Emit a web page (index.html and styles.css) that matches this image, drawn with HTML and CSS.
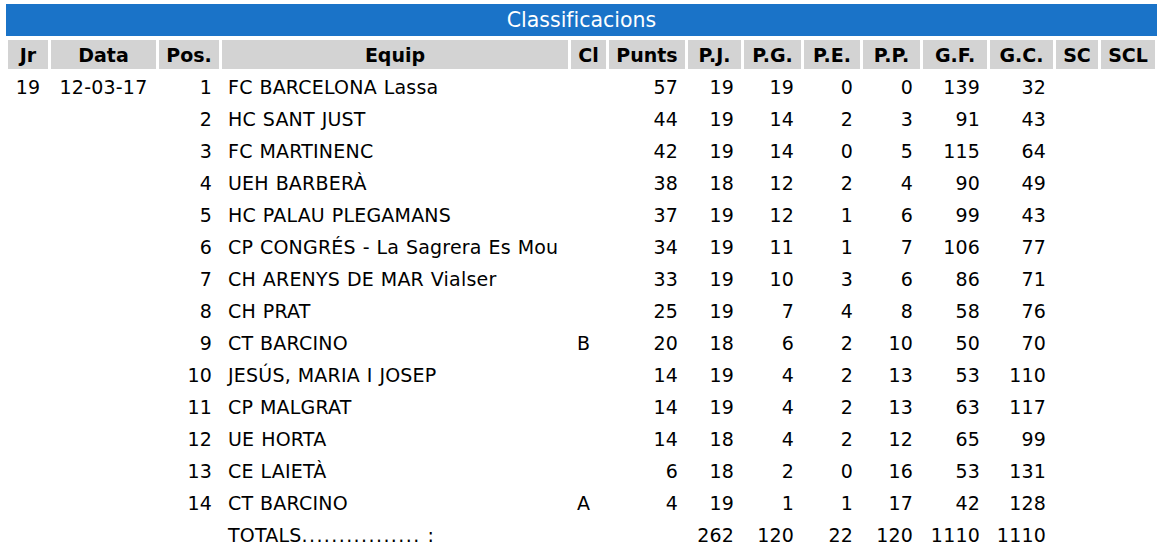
FILE: index.html
```html
<!DOCTYPE html>
<html lang="ca">
<head>
<meta charset="utf-8">
<title>Classificacions</title>
<link rel="stylesheet" href="styles.css">
</head>
<body>
<div class="panel">
  <div class="title">Classificacions</div>
  <table class="standings">
    <thead>
      <tr>
        <th class="w-jr">Jr</th>
        <th class="w-data">Data</th>
        <th class="w-pos">Pos.</th>
        <th class="w-equip">Equip</th>
        <th class="w-cl">Cl</th>
        <th class="w-punts">Punts</th>
        <th class="w-pj">P.J.</th>
        <th class="w-pg">P.G.</th>
        <th class="w-pe">P.E.</th>
        <th class="w-pp">P.P.</th>
        <th class="w-gf">G.F.</th>
        <th class="w-gc">G.C.</th>
        <th class="w-sc">SC</th>
        <th class="w-scl">SCL</th>
      </tr>
    </thead>
    <tbody>
      <tr><td class="ctr">19</td><td class="ctr">12-03-17</td><td class="num">1</td><td>FC BARCELONA Lassa</td><td></td><td class="num">57</td><td class="num">19</td><td class="num">19</td><td class="num">0</td><td class="num">0</td><td class="num">139</td><td class="num">32</td><td></td><td></td></tr>
      <tr><td></td><td></td><td class="num">2</td><td>HC SANT JUST</td><td></td><td class="num">44</td><td class="num">19</td><td class="num">14</td><td class="num">2</td><td class="num">3</td><td class="num">91</td><td class="num">43</td><td></td><td></td></tr>
      <tr><td></td><td></td><td class="num">3</td><td>FC MARTINENC</td><td></td><td class="num">42</td><td class="num">19</td><td class="num">14</td><td class="num">0</td><td class="num">5</td><td class="num">115</td><td class="num">64</td><td></td><td></td></tr>
      <tr><td></td><td></td><td class="num">4</td><td>UEH BARBERÀ</td><td></td><td class="num">38</td><td class="num">18</td><td class="num">12</td><td class="num">2</td><td class="num">4</td><td class="num">90</td><td class="num">49</td><td></td><td></td></tr>
      <tr><td></td><td></td><td class="num">5</td><td>HC PALAU PLEGAMANS</td><td></td><td class="num">37</td><td class="num">19</td><td class="num">12</td><td class="num">1</td><td class="num">6</td><td class="num">99</td><td class="num">43</td><td></td><td></td></tr>
      <tr><td></td><td></td><td class="num">6</td><td>CP CONGRÉS - La Sagrera Es Mou</td><td></td><td class="num">34</td><td class="num">19</td><td class="num">11</td><td class="num">1</td><td class="num">7</td><td class="num">106</td><td class="num">77</td><td></td><td></td></tr>
      <tr><td></td><td></td><td class="num">7</td><td>CH ARENYS DE MAR Vialser</td><td></td><td class="num">33</td><td class="num">19</td><td class="num">10</td><td class="num">3</td><td class="num">6</td><td class="num">86</td><td class="num">71</td><td></td><td></td></tr>
      <tr><td></td><td></td><td class="num">8</td><td>CH PRAT</td><td></td><td class="num">25</td><td class="num">19</td><td class="num">7</td><td class="num">4</td><td class="num">8</td><td class="num">58</td><td class="num">76</td><td></td><td></td></tr>
      <tr><td></td><td></td><td class="num">9</td><td>CT BARCINO</td><td>B</td><td class="num">20</td><td class="num">18</td><td class="num">6</td><td class="num">2</td><td class="num">10</td><td class="num">50</td><td class="num">70</td><td></td><td></td></tr>
      <tr><td></td><td></td><td class="num">10</td><td>JESÚS, MARIA I JOSEP</td><td></td><td class="num">14</td><td class="num">19</td><td class="num">4</td><td class="num">2</td><td class="num">13</td><td class="num">53</td><td class="num">110</td><td></td><td></td></tr>
      <tr><td></td><td></td><td class="num">11</td><td>CP MALGRAT</td><td></td><td class="num">14</td><td class="num">19</td><td class="num">4</td><td class="num">2</td><td class="num">13</td><td class="num">63</td><td class="num">117</td><td></td><td></td></tr>
      <tr><td></td><td></td><td class="num">12</td><td>UE HORTA</td><td></td><td class="num">14</td><td class="num">18</td><td class="num">4</td><td class="num">2</td><td class="num">12</td><td class="num">65</td><td class="num">99</td><td></td><td></td></tr>
      <tr><td></td><td></td><td class="num">13</td><td>CE LAIETÀ</td><td></td><td class="num">6</td><td class="num">18</td><td class="num">2</td><td class="num">0</td><td class="num">16</td><td class="num">53</td><td class="num">131</td><td></td><td></td></tr>
      <tr><td></td><td></td><td class="num">14</td><td>CT BARCINO</td><td>A</td><td class="num">4</td><td class="num">19</td><td class="num">1</td><td class="num">1</td><td class="num">17</td><td class="num">42</td><td class="num">128</td><td></td><td></td></tr>
      <tr><td></td><td></td><td></td><td class="totals">TOTALS<span class="dots">................</span> :</td><td></td><td></td><td class="num">262</td><td class="num">120</td><td class="num">22</td><td class="num">120</td><td class="num">1110</td><td class="num">1110</td><td></td><td></td></tr>
    </tbody>
  </table>
</div>
</body>
</html>
```
FILE: styles.css
```css
html, body {
  margin: 0;
  padding: 0;
  background: #ffffff;
}

body {
  font-family: "DejaVu Sans", Verdana, sans-serif;
  color: #000000;
}

.panel {
  padding-top: 4px;
}

.title {
  margin-left: 6px;
  width: 1151px;
  height: 32px;
  line-height: 32px;
  background: #1a73c8;
  color: #ffffff;
  font-size: 20.5px;
  text-align: center;
}

.standings {
  margin-top: 1px;
  margin-left: 5px;
  width: 1153px;
  table-layout: fixed;
  border-collapse: separate;
  border-spacing: 3px;
  font-size: 19px;
}

.standings th,
.standings td {
  box-sizing: border-box;
  height: 29px;
  padding: 1px 7px 0 6px;
  line-height: 22px;
  white-space: nowrap;
  overflow: hidden;
  vertical-align: middle;
  text-align: left;
}

.standings td {
  letter-spacing: 0.2px;
  word-spacing: 0.6px;
}

.standings th {
  background: #d3d3d3;
  font-weight: bold;
  text-align: center;
  padding-left: 2px;
  padding-right: 2px;
}

.standings td.num {
  text-align: right;
}

.standings td.ctr {
  text-align: center;
  padding-left: 2px;
  padding-right: 2px;
}

.totals .dots {
  letter-spacing: 1.4px;
}

.w-jr { width: 40px; }
.w-data { width: 105px; }
.w-pos { width: 60px; }
.w-equip { width: 346px; }
.w-cl { width: 35px; }
.w-punts { width: 76px; }
.w-pj { width: 53px; }
.w-pg { width: 57px; }
.w-pe { width: 56px; }
.w-pp { width: 57px; }
.w-gf { width: 64px; }
.w-gc { width: 63px; }
.w-sc { width: 42px; }
.w-scl { width: 54px; }
```
